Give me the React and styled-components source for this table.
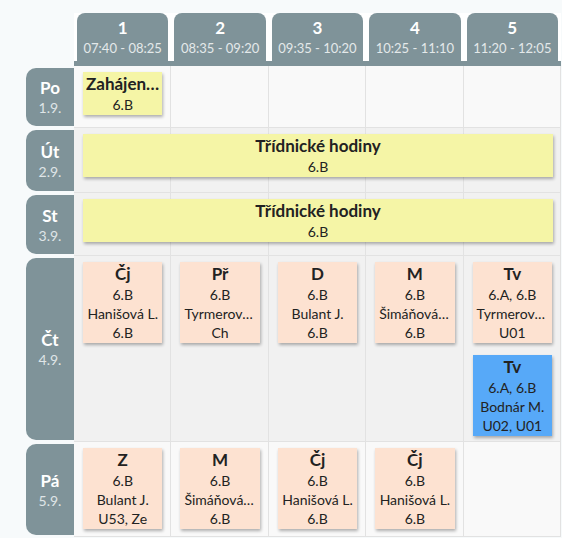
import React from 'react'
import styled, { createGlobalStyle } from 'styled-components'

const GlobalStyle = createGlobalStyle`
  html, body {
    margin: 0;
    padding: 0;
    background: #f7fafb;
  }
  body {
    font-family: Lato, "Liberation Sans", sans-serif;
    color: #222;
  }
`

const Grid = styled.div`
  display: grid;
  grid-template-columns: 48px repeat(5, 1fr);
  grid-template-rows: 53px 62px 65px 63px 186px 95px;
  width: 535px;
  margin: 13px 0 0 26px;
`

const HeadSlot = styled.div`
  grid-row: 1;
  grid-column: ${(p) => p.$col};
  display: flex;
  padding: 0 3px;
  background: #fff;
  border-bottom: 5px solid #7f9399;
`

const Tab = styled.div`
  flex: 1;
  display: flex;
  flex-direction: column;
  align-items: center;
  justify-content: center;
  background: #7f9399;
  border-radius: 8px 8px 0 0;
  padding-top: 2px;
`

const TabNumber = styled.div`
  font-weight: 700;
  font-size: 17px;
  line-height: 20px;
  color: #fff;
`

const TabTime = styled.div`
  font-size: 13px;
  line-height: 20px;
  color: #e4e9ea;
`

const DayLabel = styled.div`
  grid-row: ${(p) => p.$row};
  grid-column: 1;
  margin: 2px 0;
  display: flex;
  flex-direction: column;
  align-items: center;
  justify-content: center;
  background: #7f9399;
  border-radius: 10px 0 0 10px;
`

const DayName = styled.div`
  font-weight: 700;
  font-size: 17px;
  line-height: 21px;
  color: #fff;
`

const DayDate = styled.div`
  font-size: 14px;
  line-height: 19px;
  color: #dfe5e7;
`

const Cell = styled.div`
  grid-row: ${(p) => p.$row};
  grid-column: ${(p) => p.$col};
  display: flex;
  flex-direction: column;
  gap: 12px;
  padding: 6px 8px 0 9px;
  min-width: 0;
  background: ${(p) => (p.$shade ? '#f1f1f1' : '#f9f9f9')};
  border-right: 1px solid #e2e2e2;
  border-bottom: 1px solid #e2e2e2;
`

const cardColors = {
  lesson: '#fde2d1',
  event: '#f5f5a6',
  change: '#57a9f8',
}

const Card = styled.div`
  background: ${(p) => cardColors[p.$kind]};
  box-shadow: 1px 2px 3px rgba(0, 0, 0, 0.3);
  padding: 1px 3px;
  text-align: center;
  min-width: 0;
`

const WideCard = styled(Card)`
  grid-row: ${(p) => p.$row};
  grid-column: 2 / span 5;
  align-self: start;
  margin: 6px 8px 0 9px;
  z-index: 1;
`

const CardTitle = styled.div`
  font-weight: 700;
  font-size: 17px;
  line-height: 22px;
  white-space: nowrap;
  overflow: hidden;
  text-overflow: ellipsis;
`

const CardLine = styled.div`
  font-size: 14px;
  line-height: 19px;
  padding: 0 1px;
  white-space: nowrap;
  overflow: hidden;
  text-overflow: ellipsis;
`

const periods = [
  { n: 1, time: '07:40 - 08:25' },
  { n: 2, time: '08:35 - 09:20' },
  { n: 3, time: '09:35 - 10:20' },
  { n: 4, time: '10:25 - 11:10' },
  { n: 5, time: '11:20 - 12:05' },
]

const L = (title, group, teacher, room, kind = 'lesson') => ({ title, lines: [group, teacher, room], kind })

const days = [
  {
    name: 'Po',
    date: '1.9.',
    shade: false,
    slots: [[{ title: 'Zahájení školního roku', lines: ['6.B'], kind: 'event' }], [], [], [], []],
  },
  {
    name: 'Út',
    date: '2.9.',
    shade: true,
    wide: { title: 'Třídnické hodiny', lines: ['6.B'] },
    slots: [[], [], [], [], []],
  },
  {
    name: 'St',
    date: '3.9.',
    shade: true,
    wide: { title: 'Třídnické hodiny', lines: ['6.B'] },
    slots: [[], [], [], [], []],
  },
  {
    name: 'Čt',
    date: '4.9.',
    shade: true,
    slots: [
      [L('Čj', '6.B', 'Hanišová L.', '6.B')],
      [L('Př', '6.B', 'Tyrmerová K.', 'Ch')],
      [L('D', '6.B', 'Bulant J.', '6.B')],
      [L('M', '6.B', 'Šimáňová E.', '6.B')],
      [L('Tv', '6.A, 6.B', 'Tyrmerová K.', 'U01'), L('Tv', '6.A, 6.B', 'Bodnár M.', 'U02, U01', 'change')],
    ],
  },
  {
    name: 'Pá',
    date: '5.9.',
    shade: false,
    slots: [
      [L('Z', '6.B', 'Bulant J.', 'U53, Ze')],
      [L('M', '6.B', 'Šimáňová E.', '6.B')],
      [L('Čj', '6.B', 'Hanišová L.', '6.B')],
      [L('Čj', '6.B', 'Hanišová L.', '6.B')],
      [],
    ],
  },
]

const CardBody = ({ item }) => (
  <>
    <CardTitle>{item.title}</CardTitle>
    {item.lines.map((line, i) => (
      <CardLine key={i}>{line}</CardLine>
    ))}
  </>
)

const App = () => {
  return (
    <>
      <GlobalStyle />
      <Grid>
        {periods.map((p) => (
          <HeadSlot key={p.n} $col={p.n + 1}>
            <Tab>
              <TabNumber>{p.n}</TabNumber>
              <TabTime>{p.time}</TabTime>
            </Tab>
          </HeadSlot>
        ))}

        {days.map((day, d) => {
          const row = d + 2
          return (
            <React.Fragment key={day.name}>
              <DayLabel $row={row}>
                <DayName>{day.name}</DayName>
                <DayDate>{day.date}</DayDate>
              </DayLabel>
              {day.slots.map((items, c) => (
                <Cell key={c} $row={row} $col={c + 2} $shade={day.shade}>
                  {items.map((item, i) => (
                    <Card key={i} $kind={item.kind}>
                      <CardBody item={item} />
                    </Card>
                  ))}
                </Cell>
              ))}
              {day.wide && (
                <WideCard $row={row} $kind="event">
                  <CardBody item={day.wide} />
                </WideCard>
              )}
            </React.Fragment>
          )
        })}
      </Grid>
    </>
  )
}

export default App
